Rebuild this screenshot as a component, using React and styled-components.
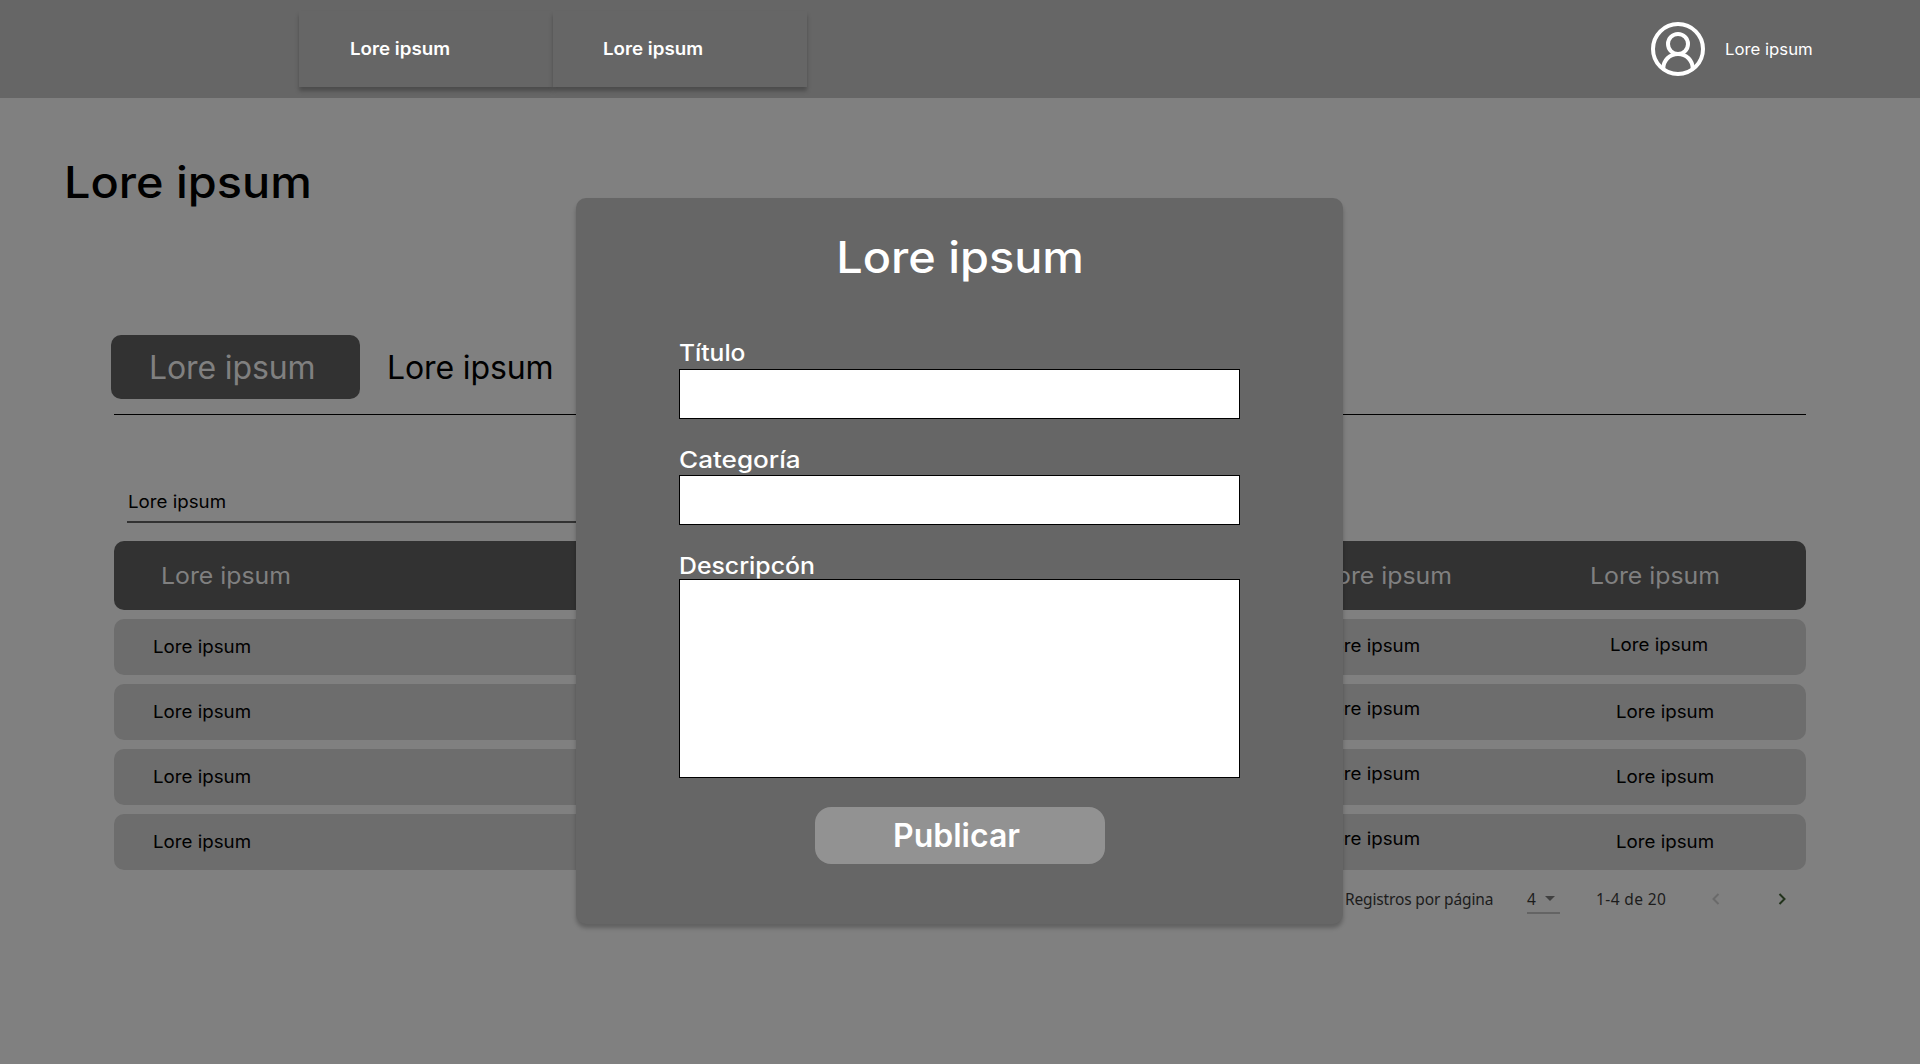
import React from "react";
import styled, { createGlobalStyle } from "styled-components";

const GlobalStyle = createGlobalStyle`
  * { box-sizing: border-box; }
  body {
    margin: 0;
    background: #808080;
    font-family: Inter, "Open Sans", sans-serif;
    color: #000;
  }
`;

const Page = styled.div`
  position: relative;
  display: flex;
  flex-direction: column;
  height: 1064px;
  overflow: hidden;
  background: #808080;
`;

const Wide = styled.span`
  display: block;
  width: max-content;
  white-space: nowrap;
  font-size: ${(p) => p.$size}px;
  font-weight: ${(p) => p.$weight || 400};
  line-height: ${(p) => p.$line || 28}px;
  transform: scaleX(${(p) => p.$stretch || 1.07});
  transform-origin: ${(p) => p.$origin || "left"} center;
`;

const Header = styled.header`
  display: flex;
  flex: none;
  justify-content: space-between;
  height: 98px;
  padding: 11px 106px 11px 299px;
  background: #666;
  color: #fff;
`;

const Nav = styled.nav`
  display: flex;
  height: 76px;
`;

const NavItem = styled.a`
  display: flex;
  align-items: center;
  width: 254px;
  padding: 0 0 0 ${(p) => p.$indent}px;
  background: #666;
  box-shadow: 0 4px 4px rgba(0, 0, 0, 0.25);
`;

const User = styled.div`
  display: flex;
  align-items: center;
  gap: 20px;
  width: 163px;
`;

const UserName = styled.div`
  padding-top: 2px;
`;

const Title = styled.h1`
  margin: 54px 0 0 64px;
`;

const Content = styled.main`
  display: flex;
  flex-direction: column;
  width: 1692px;
  margin: 123px 0 0 114px;
`;

const Tabs = styled.div`
  display: flex;
  height: 80px;
  margin-left: -3px;
`;

const Tab = styled.button`
  width: 249px;
  height: 64px;
  padding: 1px 0 0 38px;
  border: 0;
  border-radius: 10px;
  background: ${(p) => (p.$active ? "#323232" : "transparent")};
  color: ${(p) => (p.$active ? "#808080" : "#000")};
  font: 400 32px/64px Inter, sans-serif;
  letter-spacing: -0.13px;
  text-align: left;
  white-space: nowrap;
  & + & { padding-left: 27px; }
`;

const Divider = styled.hr`
  width: 1692px;
  height: 1px;
  margin: -1px 0 0;
  border: 0;
  background: #000;
`;

const Search = styled.div`
  width: 620px;
  height: 36px;
  margin: 72px 0 18px 13px;
  border-bottom: 2px solid #323232;
  padding: 1px 0 0 1px;
`;

const HeadRow = styled.div`
  display: grid;
  grid-template-columns: 1207px 268px 1fr;
  align-items: center;
  height: 69px;
  border-radius: 10px;
  background: #323232;
  color: #808080;
`;

const HeadCell = styled.div`
  padding-left: ${(p) => p.$indent || 0}px;
`;

const Rows = styled.div`
  display: flex;
  flex-direction: column;
  gap: 9px;
  margin-top: 9px;
`;

const Row = styled.div`
  display: grid;
  grid-template-columns: 1207px 288px 1fr;
  height: 56px;
  border-radius: 10px;
  background: #6d6d6d;
`;

const Cell = styled.div`
  padding: ${(p) => 14 - (p.$raise || 0)}px 0 0 ${(p) => p.$indent || 0}px;
`;

const Pager = styled.footer`
  display: flex;
  align-items: center;
  height: 58px;
  padding-left: 1231px;
  color: #1c1c1c;
  font: 400 15.5px/24px "Noto Sans", "Open Sans", sans-serif;
`;

const PagerText = styled.span`
  width: ${(p) => p.$width}px;
  padding-bottom: 1px;
  white-space: nowrap;
  letter-spacing: ${(p) => p.$spacing || 0}px;
`;

const PageSize = styled.div`
  display: flex;
  align-items: center;
  justify-content: space-between;
  width: 33px;
  height: 27px;
  margin: 2px 36px 0 0;
  padding: 0 5px 1px 0;
  border-bottom: 2px solid #646464;
`;

const Overlay = styled.div`
  position: absolute;
  inset: 0;
  padding: 198px 0 0 576px;
`;

const Modal = styled.form`
  display: flex;
  flex-direction: column;
  width: 767px;
  height: 726px;
  padding: 29px 103px 0;
  border-radius: 10px;
  background: #666;
  box-shadow: 0 4px 4px rgba(0, 0, 0, 0.25);
  color: #fff;
`;

const ModalTitle = styled.h2`
  display: flex;
  justify-content: center;
  height: 60px;
  margin: 0;
  padding-left: 1px;
`;

const Field = styled.label`
  display: block;
  margin-top: ${(p) => p.$top}px;
`;

const Box = styled.span`
  display: block;
  position: relative;
  width: 561px;
  height: ${(p) => p.$height}px;
  margin-top: ${(p) => p.$gap}px;
  border: 1px solid #000;
  background: #fff;
`;

const Submit = styled.button`
  align-self: center;
  width: 290px;
  height: 57px;
  margin-top: 29px;
  padding: 0 6px 0 0;
  border: 0;
  border-radius: 16px;
  background: #929292;
  color: #fff;
  font: 600 32px/57px Inter, sans-serif;
`;

const rows = [
  { raise: [0, 1, 2], indent: 1 },
  { raise: [0, 3, 0], indent: 7 },
  { raise: [0, 3, 0], indent: 7 },
  { raise: [0, 3, 0], indent: 7 },
];

function Avatar() {
  return (
    <svg width="54" height="54" viewBox="0 0 54 54" fill="none" stroke="#fff" strokeWidth="4">
      <circle cx="27" cy="27" r="25" />
      <circle cx="27" cy="22" r="10" />
      <path d="M12.3 47V46.5C12.3 38.5 18.5 32 27 32S41.7 38.5 41.7 46.5V47" />
    </svg>
  );
}

export default function App() {
  return (
    <Page>
      <GlobalStyle />
      <Header>
        <Nav>
          <NavItem $indent={51}><Wide $size={17.5} $weight={600}>Lore ipsum</Wide></NavItem>
          <NavItem $indent={50}><Wide $size={17.5} $weight={600}>Lore ipsum</Wide></NavItem>
        </Nav>
        <User>
          <Avatar />
          <UserName><Wide $size={15.5} $stretch={1.08}>Lore ipsum</Wide></UserName>
        </User>
      </Header>

      <Title><Wide $size={43.5} $weight={500} $line={60} $stretch={1.077}>Lore ipsum</Wide></Title>

      <Content>
        <Tabs>
          <Tab $active>Lore ipsum</Tab>
          <Tab>Lore ipsum</Tab>
        </Tabs>
        <Divider />
        <Search><Wide $size={17.5}>Lore ipsum</Wide></Search>
        <HeadRow>
          <HeadCell $indent={47}><Wide $size={23.2}>Lore ipsum</Wide></HeadCell>
          <HeadCell $indent={1}><Wide $size={23.2}>Lore ipsum</Wide></HeadCell>
          <HeadCell $indent={1}><Wide $size={23.2}>Lore ipsum</Wide></HeadCell>
        </HeadRow>
        <Rows>
          {rows.map((row, i) => (
            <Row key={i}>
              <Cell $indent={39} $raise={row.raise[0]}><Wide $size={17.5}>Lore ipsum</Wide></Cell>
              <Cell $indent={1} $raise={row.raise[1]}><Wide $size={17.5}>Lore ipsum</Wide></Cell>
              <Cell $indent={row.indent} $raise={row.raise[2]}><Wide $size={17.5}>Lore ipsum</Wide></Cell>
            </Row>
          ))}
        </Rows>
        <Pager>
          <PagerText $width={182} $spacing={-0.15}>Registros por página</PagerText>
          <PageSize>
            4
            <svg width="10" height="5" viewBox="0 0 10 5" fill="#404040"><path d="M0 0H10L5 5Z" /></svg>
          </PageSize>
          <PagerText $width={116} $spacing={0.4}>1-4 de 20</PagerText>
          <svg width="74" height="12" viewBox="0 0 74 12" fill="none" strokeWidth="2">
            <path d="M6.5 1L1.5 6L6.5 11" stroke="#6a6a6a" />
            <path d="M67.5 1L72.5 6L67.5 11" stroke="#22331c" />
          </svg>
        </Pager>
      </Content>

      <Overlay>
        <Modal>
          <ModalTitle><Wide $size={43.5} $weight={500} $line={60} $stretch={1.077} $origin="center">Lore ipsum</Wide></ModalTitle>
          <Field $top={52}><Wide $size={23.2} $weight={500} $stretch={1.06}>Título</Wide><Box $height={50} $gap={2} /></Field>
          <Field $top={27}><Wide $size={23.2} $weight={500} $stretch={1.125}>Categoría</Wide><Box $height={50} $gap={1} /></Field>
          <Field $top={27}><Wide $size={23.2} $weight={500} $stretch={1.07}>Descripcón</Wide><Box $height={199} $gap={-1} /></Field>
          <Submit type="button">Publicar</Submit>
        </Modal>
      </Overlay>
    </Page>
  );
}
